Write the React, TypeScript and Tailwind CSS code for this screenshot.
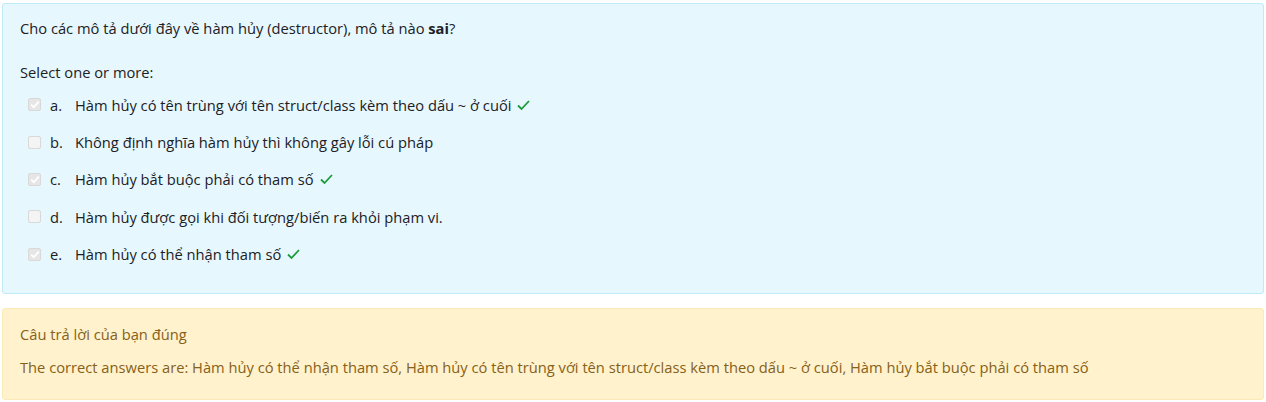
const options = [
  { key: 'a', text: 'Hàm hủy có tên trùng với tên struct/class kèm theo dấu ~ ở cuối', checked: true },
  { key: 'b', text: 'Không định nghĩa hàm hủy thì không gây lỗi cú pháp', checked: false },
  { key: 'c', text: 'Hàm hủy bắt buộc phải có tham số', checked: true },
  { key: 'd', text: 'Hàm hủy được gọi khi đối tượng/biến ra khỏi phạm vi.', checked: false },
  { key: 'e', text: 'Hàm hủy có thể nhận tham số', checked: true },
];

function Tick() {
  return (
    <svg width="15" height="12" viewBox="0 0 14 12" className="ml-[5px] inline-block">
      <path d="M1.5 6.5 L5 10 L12.5 2" fill="none" stroke="#1d9b3b" strokeWidth="1.8" />
    </svg>
  );
}

function Box({ checked }: { checked: boolean }) {
  return (
    <span className="flex h-[13px] w-[13px] items-center justify-center rounded-[2px] border border-[#d9d9d9] bg-[#e6e6e6]">
      {checked && (
        <svg width="10" height="9" viewBox="0 0 10 9">
          <path d="M1.2 4.6 L3.8 7.2 L8.8 1.6" fill="none" stroke="#ffffff" strokeWidth="1.8" />
        </svg>
      )}
      {!checked && <span className="h-full w-full rounded-[2px] bg-[#f4f4f4]" />}
    </span>
  );
}

export default function App() {
  return (
    <div className="min-h-screen bg-white px-[2px] pt-[3px] text-[14.7px] text-[#1d2125]" style={{ fontFamily: '"Open Sans", sans-serif' }}>
      <div className="rounded-[3px] border border-[#bfeaf7] bg-[#e6f8fe] px-[17px] pb-[20px] pt-[14px]">
        <p className="leading-[20px]">
          Cho các mô tả dưới đây về hàm hủy (destructor), mô tả nào <b className="font-bold">sai</b>?
        </p>
        <p className="mt-[24px] leading-[20px]">Select one or more:</p>
        <div className="mt-[4px] flex flex-col">
          {options.map((o) => (
            <div key={o.key} className="flex h-[37.4px] items-center pl-[8px]">
              <Box checked={o.checked} />
              <span className="ml-[9px] w-[25px]">{o.key}.</span>
              <span>{o.text}</span>
              {o.checked && <Tick />}
            </div>
          ))}
        </div>
      </div>
      <div className="mt-[14px] rounded-[3px] border border-[#fbeab8] bg-[#fff2cc] px-[17px] pb-[22px] pt-[15px] text-[14.7px] text-[#86611a]">
        <p className="leading-[20px]">Câu trả lời của bạn đúng</p>
        <p className="mt-[13px] leading-[20px]">
          The correct answers are: Hàm hủy có thể nhận tham số, Hàm hủy có tên trùng với tên struct/class kèm theo dấu ~ ở cuối, Hàm hủy bắt buộc phải có tham số
        </p>
      </div>
    </div>
  );
}
